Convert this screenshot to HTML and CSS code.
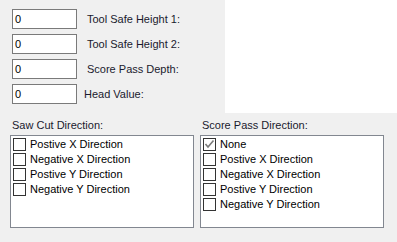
FILE: index.html
```html
<!DOCTYPE html>
<html>
<head>
<meta charset="utf-8">
<link rel="stylesheet" href="styles.css">
</head>
<body>
<div class="top">
  <div class="fields">
    <div class="row"><div class="input">0</div><span class="label">Tool Safe Height 1:</span></div>
    <div class="row"><div class="input">0</div><span class="label">Tool Safe Height 2:</span></div>
    <div class="row"><div class="input">0</div><span class="label">Score Pass Depth:</span></div>
    <div class="row"><div class="input">0</div><span class="label label-head">Head Value:</span></div>
  </div>
  <div class="blank"></div>
</div>
<div class="bottom">
  <div class="group">
    <div class="group-title">Saw Cut Direction:</div>
    <div class="list">
      <div class="item"><span class="box"></span>Postive X Direction</div>
      <div class="item"><span class="box"></span>Negative X Direction</div>
      <div class="item"><span class="box"></span>Postive Y Direction</div>
      <div class="item"><span class="box"></span>Negative Y Direction</div>
    </div>
  </div>
  <div class="group">
    <div class="group-title">Score Pass Direction:</div>
    <div class="list">
      <div class="item"><span class="box"><svg width="11" height="11" viewBox="0 0 11 11"><polyline points="1.5,5 4,8 9.5,1.5" fill="none" stroke="#7a7a7a" stroke-width="1.6"/></svg></span>None</div>
      <div class="item"><span class="box"></span>Postive X Direction</div>
      <div class="item"><span class="box"></span>Negative X Direction</div>
      <div class="item"><span class="box"></span>Postive Y Direction</div>
      <div class="item"><span class="box"></span>Negative Y Direction</div>
    </div>
  </div>
</div>
</body>
</html>
```

FILE: styles.css
```css
html, body {
  margin: 0;
  padding: 0;
}
body {
  width: 397px;
  height: 242px;
  background: #f0f0f0;
  font-family: "Liberation Sans", Arial, sans-serif;
  font-size: 11px;
  color: #000;
  overflow: hidden;
}
.top {
  display: flex;
  height: 113px;
}
.fields {
  width: 225px;
  box-sizing: border-box;
  padding: 9px 0 0 12px;
  display: flex;
  flex-direction: column;
  gap: 5px;
}
.row {
  display: flex;
  align-items: center;
  height: 20px;
}
.input {
  box-sizing: border-box;
  width: 65px;
  height: 20px;
  border: 1px solid #7a7a7a;
  background: #fff;
  padding-left: 2px;
  line-height: 18px;
}
.label {
  margin-left: 10px;
  color: #1a1a2e;
}
.label-head {
  margin-left: 7px;
}
.blank {
  flex: 1;
  background: #fff;
}
.bottom {
  display: flex;
  gap: 6px;
  padding: 6px 0 0 10px;
}
.group {
  width: 184px;
}
.group-title {
  margin-left: 2px;
  line-height: 13px;
  height: 13px;
  margin-bottom: 3px;
  color: #1a1a2e;
}
.list {
  box-sizing: border-box;
  height: 93px;
  border: 1px solid #828790;
  background: #fff;
  padding: 1px 0 0 1px;
}
.item {
  display: flex;
  align-items: center;
  height: 15px;
  line-height: 15px;
}
.box {
  box-sizing: border-box;
  width: 13px;
  height: 13px;
  margin-left: 1px;
  margin-right: 4px;
  border: 1px solid #333;
  background: #fff;
  display: flex;
  align-items: center;
  justify-content: center;
}
.box svg {
  display: block;
}
```
